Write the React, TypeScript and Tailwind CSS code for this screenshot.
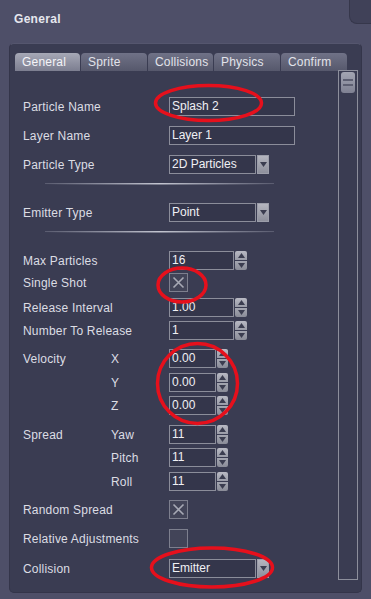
import React from 'react';

const Label: React.FC<{ text: string; sub?: string }> = ({ text, sub }) => (
  <div className="flex w-[146px] shrink-0 items-center text-[12px] tracking-[0.2px] text-[#dcdde4]">
    <div className={sub !== undefined ? 'w-[88px]' : ''}>{text}</div>
    {sub !== undefined && <div>{sub}</div>}
  </div>
);

const TextBox: React.FC<{ value: string }> = ({ value }) => (
  <div className="h-[19px] w-[126px] border border-[#8b8d9a] bg-[#34364b] pl-[2px] text-[12px] leading-[17px] text-[#f0f0f4]">
    {value}
  </div>
);

const Arrow: React.FC<{ up?: boolean }> = ({ up }) => (
  <svg width="7" height="5" viewBox="0 0 7 5">
    <path d={up ? 'M0 5 L3.5 0 L7 5 Z' : 'M0 0 L7 0 L3.5 5 Z'} fill="#3b3d50" />
  </svg>
);

const Dropdown: React.FC<{ value: string }> = ({ value }) => (
  <div className="flex h-[19px]">
    <div className="h-full w-[87px] border border-[#8b8d9a] bg-[#34364b] pl-[2px] text-[12px] leading-[17px] text-[#f0f0f4]">
      {value}
    </div>
    <div className="ml-[1px] flex h-full w-[12px] items-center justify-center border border-[#9c9eaa] bg-gradient-to-b from-[#b4b5bf] to-[#8e909c]">
      <Arrow />
    </div>
  </div>
);

const Spinner: React.FC<{ value: string; narrow?: boolean }> = ({ value, narrow }) => (
  <div className="flex h-[19px]">
    <div
      className={`h-full border border-[#8b8d9a] bg-[#34364b] pl-[2px] text-[12px] leading-[17px] text-[#f0f0f4] ${
        narrow ? 'w-[47px]' : 'w-[65px]'
      }`}
    >
      {value}
    </div>
    <div className={`ml-[1px] flex h-full flex-col gap-[1px] ${narrow ? 'w-[11px]' : 'w-[12px]'}`}>
      <div className="flex flex-1 items-center justify-center rounded-t-[2px] bg-gradient-to-b from-[#b9bac4] to-[#999ba7]">
        <Arrow up />
      </div>
      <div className="flex flex-1 items-center justify-center rounded-b-[2px] bg-gradient-to-b from-[#a4a6b1] to-[#8a8c98]">
        <Arrow />
      </div>
    </div>
  </div>
);

const Check: React.FC<{ checked?: boolean }> = ({ checked }) => (
  <div className="flex h-[19px] w-[19px] items-center justify-center border border-[#7d7f8e] bg-[#424458]">
    {checked && (
      <svg width="13" height="13" viewBox="0 0 13 13">
        <path d="M1.5 1.5 L11.5 11.5 M11.5 1.5 L1.5 11.5" stroke="#a7a9b5" strokeWidth="1.6" />
      </svg>
    )}
  </div>
);

const Row: React.FC<{ className?: string; label: string; sub?: string; children: React.ReactNode }> = ({
  className,
  label,
  sub,
  children,
}) => (
  <div className={`flex h-[19px] items-center ${className ?? ''}`}>
    <Label text={label} sub={sub} />
    {children}
  </div>
);

// thin light rule, fading out at both ends
const Separator: React.FC<{ className?: string }> = ({ className }) => (
  <div className={`ml-[22px] w-[229px] ${className ?? ''}`}>
    <div className="h-px bg-gradient-to-r from-[#5a5c70] via-[#c3c5d0] to-[#5a5c70]" />
    <div className="h-px bg-gradient-to-r from-transparent via-[#7d7f90] to-transparent" />
  </div>
);

const tabs = [
  { name: 'General', w: 'w-[65px]', active: true },
  { name: 'Sprite', w: 'w-[66px]' },
  { name: 'Collisions', w: 'w-[65px]' },
  { name: 'Physics', w: 'w-[66px]' },
  { name: 'Confirm', w: 'w-[66px]' },
];

export default function App() {
  return (
    <div className="relative h-[599px] w-[371px] overflow-hidden bg-[#4e4f68] font-['Liberation_Sans',Arial,sans-serif]">
      {/* header */}
      <div className="flex h-[43px]">
        <div className="flex-1 pl-[14px] pt-[10px] text-[12px] font-bold tracking-[0.3px] text-[#e6e7ee]">General</div>
        <div className="h-[24px] w-[22px] rounded-bl-[8px] border-b border-l border-[#36374b] bg-[#404158]" />
      </div>

      {/* panel */}
      <div className="ml-[9px] flex h-[550px] w-[353px] flex-col rounded-[5px] border border-[#34354a] border-t-[#55566e] bg-[#3a3c52]">
        <div className="flex gap-[1px] pl-[5px] pt-[9px]">
          {tabs.map((t) => (
            <div
              key={t.name}
              className={`h-[18px] ${t.w} rounded-t-[4px] pl-[7px] text-[12px] leading-[18px] tracking-[0.2px] ${
                t.active
                  ? 'bg-gradient-to-b from-[#a6a8b6] to-[#7c7e90] text-[#f4f4f8]'
                  : 'bg-gradient-to-b from-[#707287] to-[#56586c] text-[#e2e3ea]'
              }`}
            >
              {t.name}
            </div>
          ))}
        </div>

        <div className="flex flex-1">
          <div className="flex flex-1 flex-col pl-[13px] pt-[26px]">
            <Row label="Particle Name">
              <TextBox value="Splash 2" />
            </Row>
            <Row className="mt-[10px]" label="Layer Name">
              <TextBox value="Layer 1" />
            </Row>
            <Row className="mt-[10px]" label="Particle Type">
              <Dropdown value="2D Particles" />
            </Row>
            <Separator className="mt-[9px]" />
            <Row className="mt-[18px]" label="Emitter Type">
              <Dropdown value="Point" />
            </Row>
            <Separator className="mt-[9px]" />
            <Row className="mt-[18px]" label="Max Particles">
              <Spinner value="16" />
            </Row>
            <Row className="mt-[3px]" label="Single Shot">
              <Check checked />
            </Row>
            <Row className="mt-[6px]" label="Release Interval">
              <Spinner value="1.00" />
            </Row>
            <Row className="mt-[4px]" label="Number To Release">
              <Spinner value="1" />
            </Row>
            <Row className="mt-[9px]" label="Velocity" sub="X">
              <Spinner value="0.00" narrow />
            </Row>
            <Row className="mt-[5px]" label="" sub="Y">
              <Spinner value="0.00" narrow />
            </Row>
            <Row className="mt-[4px]" label="" sub="Z">
              <Spinner value="0.00" narrow />
            </Row>
            <Row className="mt-[10px]" label="Spread" sub="Yaw">
              <Spinner value="11" narrow />
            </Row>
            <Row className="mt-[4px]" label="" sub="Pitch">
              <Spinner value="11" narrow />
            </Row>
            <Row className="mt-[5px]" label="" sub="Roll">
              <Spinner value="11" narrow />
            </Row>
            <Row className="mt-[9px]" label="Random Spread">
              <Check checked />
            </Row>
            <Row className="mt-[10px]" label="Relative Adjustments">
              <Check />
            </Row>
            <Row className="mt-[11px]" label="Collision">
              <Dropdown value="Emitter" />
            </Row>
          </div>

          {/* scrollbar */}
          <div className="mr-[3px] -mt-[1px] flex h-[510px] w-[20px] flex-col items-center border border-[#8d8f9c] bg-[#3a3c52] pt-[1px]">
            <div className="flex h-[21px] w-[14px] flex-col items-center justify-center gap-[3px] rounded-[3px] bg-gradient-to-b from-[#a3a5b2] to-[#7f8193]">
              <div className="h-[2px] w-[10px] bg-[#5d5f72]" />
              <div className="h-[2px] w-[10px] bg-[#5d5f72]" />
            </div>
          </div>
        </div>
      </div>

      {/* red annotation marks */}
      <svg className="pointer-events-none absolute inset-0" width="371" height="599" viewBox="0 0 371 599">
        <g fill="none" stroke="#e6101c" strokeWidth="3.5">
          <ellipse cx="208.5" cy="103" rx="53" ry="17.5" />
          <ellipse cx="182" cy="285" rx="24" ry="17" />
          <ellipse cx="197.5" cy="383.5" rx="40" ry="40" />
          <ellipse cx="212" cy="567.5" rx="60.5" ry="19.5" />
        </g>
      </svg>
    </div>
  );
}
